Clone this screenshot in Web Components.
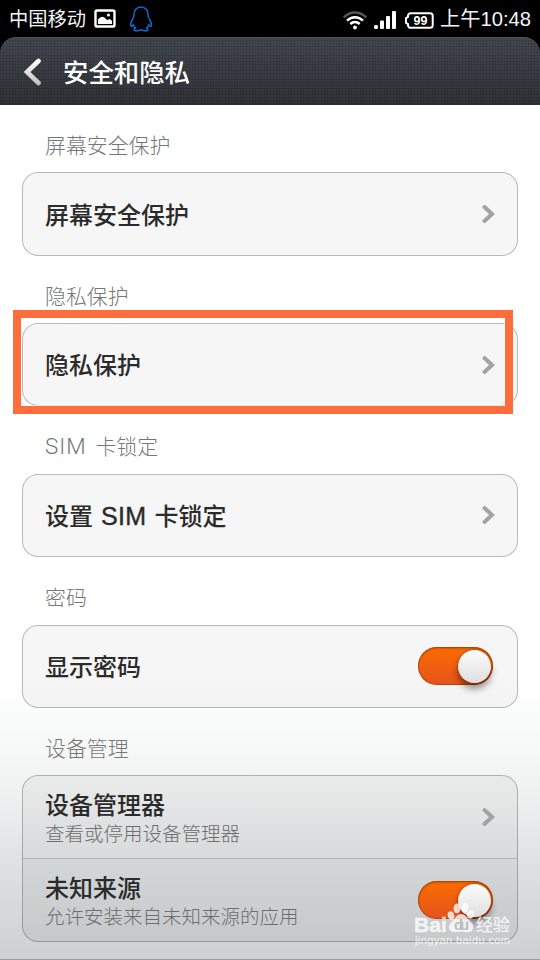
<!DOCTYPE html>
<html lang="zh-CN">
<head>
<meta charset="utf-8">
<title>安全和隐私</title>
<style>
  html,body{ margin:0; height:100%; background:#000; }
  body{ overflow:hidden; font-family:Roboto,"Noto Sans CJK SC",sans-serif; }
</style>
</head>
<body>
<settings-screen>
  <status-bar slot="top" carrier="中国移动" time="上午10:48" battery="99"></status-bar>
  <title-bar slot="top">安全和隐私</title-bar>

  <setting-group label="屏幕安全保护">
    <setting-row>屏幕安全保护</setting-row>
  </setting-group>
  <setting-group label="隐私保护" marked>
    <setting-row>隐私保护</setting-row>
  </setting-group>
  <setting-group label="SIM 卡锁定">
    <setting-row>设置 SIM 卡锁定</setting-row>
  </setting-group>
  <setting-group label="密码">
    <setting-row type="switch">显示密码</setting-row>
  </setting-group>
  <setting-group label="设备管理">
    <setting-row note="查看或停用设备管理器">设备管理器</setting-row>
    <setting-row type="switch" note="允许安装来自未知来源的应用">未知来源</setting-row>
  </setting-group>

  <water-mark slot="over"></water-mark>
</settings-screen>

<script>
(function(){
  // 基类：把 html() 的内容放进 shadow root
  class Base extends HTMLElement {
    constructor(){
      super();
      this.attachShadow({mode:'open'});
    }
    connectedCallback(){
      this.shadowRoot.innerHTML = this.html();
    }
    attr(name){ return this.getAttribute(name) || ''; }
  }

  // ───────────── settings-screen ─────────────
  class SettingsScreen extends Base {
    html(){ return `
      <style>
        :host{ display:flex; flex-direction:column; position:relative; width:540px; height:960px; overflow:hidden; background:#000; }
        main{
          flex:1; box-sizing:border-box; padding:0 22px; border-bottom:1px solid #9b9e9f;
          background:linear-gradient(#fff 0,#fff 570px,#f9fafa 625px,#eff1f1 690px,#dee1e2 760px,#cdd1d3 854px);
        }
      </style>
      <slot name="top"></slot>
      <main><slot></slot></main>
      <slot name="over"></slot>`;
    }
  }

  // ───────────── status-bar ─────────────
  class StatusBar extends Base {
    html(){ return `
      <style>
        :host{ display:flex; align-items:center; height:37px; box-sizing:border-box; padding:0 9px 0 9px; color:#f4f4f4; font-size:19.3px; line-height:37px; }
        span{ padding-top:2px; }
        svg{ display:block; flex:none; }
        .pic{ margin-left:8px; }
        .qq{ margin-left:13px; }
        .wifi{ margin-left:auto; margin-top:3px; }
        .sig{ margin-left:7px; margin-top:3px; }
        .bat{ margin-left:9px; margin-top:3px; }
        .time{ margin-left:6px; padding-top:2px; font-size:20.2px; font-weight:400; white-space:nowrap; font-family:"Liberation Sans","Noto Sans CJK SC",sans-serif; }
      </style>
      <span>${this.attr('carrier')}</span>
      <svg class="pic" width="22" height="19" viewBox="0 0 22 19">
        <rect x="1.5" y="1.5" width="19" height="16" rx="1.6" fill="none" stroke="#fff" stroke-width="2.400"/>
        <path d="M4 15v-4.500q4-5 8-.5l1.500 1L16 10l2 2v3z" fill="#fff"/><circle cx="14.500" cy="6" r="1.500" fill="#fff"/>
      </svg>
      <svg class="qq" width="24" height="26" viewBox="0 0 24 26" fill="none" stroke="#1268cc" stroke-width="1.500" stroke-linejoin="round">
        <path d="M12 1C7.500 1 5 4.500 5 8.500c0 2-.4 3-1.500 5C2 16 1.200 18.500 1.700 20c.4 1 1.500.2 2.500-1.400.5 1.600 1.200 2.700 2.300 3.600-1.600.5-2 1.600-1 2.200 1.600.8 5 .5 6.500-.9 1.500 1.400 4.900 1.700 6.500.9 1-.6.6-1.700-1-2.200 1.100-.9 1.800-2 2.300-3.600 1 1.600 2.100 2.400 2.500 1.400.5-1.500-.3-4-1.800-6.500-1.100-2-1.500-3-1.500-5C19 4.500 16.500 1 12 1z"/>
      </svg>
      <svg class="wifi" width="24" height="19" viewBox="0 0 24 19" fill="none" stroke="#fff" stroke-width="2.500">
        <path d="M.8 6.400C7-.2 17-.2 23.200 6.400" stroke="#555"/>
        <path d="M4 9.700c4.600-4.600 11.400-4.600 16 0"/><path d="M7.300 13c2.800-2.600 6.600-2.600 9.400 0"/>
        <circle cx="12" cy="16.500" r="1.900" fill="#fff" stroke="none"/>
      </svg>
      <svg class="sig" width="22" height="18" viewBox="0 0 22 18" fill="#fff">
        <rect y="14" width="4" height="4" rx="1.500"/><rect x="6" y="9.500" width="4" height="8.500" rx="1"/>
        <rect x="12" y="5" width="4" height="13" rx="1"/><rect x="18" y="0" width="4" height="18" rx="1"/>
      </svg>
      <svg class="bat" width="29" height="17" viewBox="0 0 29 17">
        <path d="M5.500 1.200h19.700q2.500 0 2.500 2.500v9.600q0 2.500-2.500 2.500H5.500Q3.500 15.800 3 13.500V12L1 11V6l2-1V3.500Q3.500 1.200 5.500 1.200z" fill="none" stroke="#fff" stroke-width="2"/>
        <text x="15.500" y="12.800" text-anchor="middle" font-family="Liberation Sans,sans-serif" font-weight="700" font-size="12.500" fill="#fff">${this.attr('battery')}</text>
      </svg>
      <span class="time">${this.attr('time')}</span>`;
    }
  }

  // ───────────── title-bar ─────────────
  class TitleBar extends Base {
    html(){ return `
      <style>
        :host{
          display:flex; align-items:center; height:68px; box-sizing:border-box; padding:1px 23px 0;
          border-radius:16px 16px 0 0; box-shadow:inset 0 1px 0 #50545a;
          color:#fff; font-size:25.4px; font-weight:500; line-height:68px;
          background:
            repeating-linear-gradient(90deg,rgba(0,0,0,.1) 0 1px,transparent 1px 3px),
            repeating-linear-gradient(rgba(0,0,0,.1) 0 1px,transparent 1px 3px),
            linear-gradient(#434850,#303236);
        }
        svg{ margin-right:21px; }
        span{ padding-top:2px; }
      </style>
      <svg width="19" height="28" viewBox="0 0 19 28" fill="none" stroke-width="4.600" stroke-linecap="round">
        <defs><linearGradient id="g" x1="0" y1="0" x2="0" y2="1"><stop stop-color="#fff"/><stop offset="1" stop-color="#c4c4c4"/></linearGradient></defs>
        <path d="M15.500 3 4 14l11.500 11" stroke="url(#g)"/>
      </svg>
      <span><slot></slot></span>`;
    }
  }

  // ───────────── setting-group ─────────────
  class SettingGroup extends Base {
    html(){
      // 西文词单独包一层，字体与间距和中文不同
      const label = this.attr('label').replace(/ ?[A-Z]+ ?/g, s => `<b>${s}</b>`);
      return `
      <style>
        :host{ display:block; position:relative; }
        h2{ margin:0; height:67.3px; padding:13px 23px 0; box-sizing:border-box; font-size:20.9px; line-height:57px; font-weight:300; color:#767777; }
        b{ font:300 22.4px/1 Roboto,sans-serif; letter-spacing:1px; word-spacing:2.5px; }
        .card{ box-sizing:border-box; border:1px solid rgba(0,0,0,.25); border-radius:16px; background:rgba(0,0,0,.034); overflow:hidden; }
        .mark{ position:absolute; left:-9.5px; top:54px; width:500px; height:104px; box-sizing:border-box; border:8px solid #ff6d3d; box-shadow:inset 0 0 0 1px rgba(255,255,255,.6); z-index:1; }
      </style>
      <h2>${label}</h2>
      <div class="card"><slot></slot></div>
      ${this.hasAttribute('marked') ? '<div class="mark"></div>' : ''}`;
    }
  }

  // ───────────── setting-row ─────────────
  class SettingRow extends Base {
    html(){
      const note = this.attr('note');
      const name = this.textContent.replace(/ ?[A-Z]+ ?/g, s => `<b>${s}</b>`);
      const end = this.attr('type') === 'switch'
        ? '<toggle-switch></toggle-switch>'
        : `<svg width="13" height="20" viewBox="0 0 13 20" fill="none" stroke="#a2a3a3" stroke-width="4" stroke-linecap="round"><path d="M2.500 3 10 10l-7.500 7"/></svg>`;
      return `
      <style>
        :host{ display:flex; align-items:center; justify-content:space-between; height:81.45px; padding:0 22px; }
        :host([note]){ height:82px; }
        :host(:not(:first-of-type)){ border-top:1px solid rgba(0,0,0,.16); background:rgba(0,0,0,.01); }
        .name{ padding-top:3px; font-size:24px; line-height:32px; font-weight:500; color:#2b2b2b; white-space:pre; }
        .name.two{ padding-top:4px; }
        b{ font:400 25px/1 "Liberation Sans",sans-serif; letter-spacing:.4px; word-spacing:.6px; -webkit-text-stroke:.4px #2b2b2b; }
        .note{ font-size:19.5px; line-height:26px; font-weight:300; color:#6c6e6e; }
        svg{ margin-right:0; }
        toggle-switch{ margin-right:2px; }
      </style>
      <div>
        <div class="name${note ? ' two' : ''}">${name}</div>
        ${note ? `<div class="note">${note}</div>` : ''}
      </div>
      ${end}`;
    }
  }

  // ───────────── toggle-switch ─────────────
  class ToggleSwitch extends Base {
    html(){ return `
      <style>
        :host{
          display:flex; justify-content:flex-end; align-items:center; flex:none; box-sizing:border-box;
          width:75px; height:38px; padding:0 2px; border-radius:19px;
          background:linear-gradient(#fb6c00,#e5531d);
          box-shadow:inset 0 0 0 1px rgba(150,60,0,.6),inset 0 2px 2px rgba(150,60,0,.4);
        }
        i{ width:33px; height:33px; border-radius:50%; background:linear-gradient(#fdfdfd,#dedede); box-shadow:0 0 2px rgba(90,20,0,.8),0 6px 7px rgba(0,0,0,.4); }
      </style>
      <i></i>`;
    }
  }

  // ───────────── water-mark ─────────────
  class WaterMark extends Base {
    html(){ return `
      <style>
        :host{ position:absolute; left:414px; top:901px; width:100px; color:#fff; opacity:.78; font-family:"Liberation Sans","Noto Sans CJK SC",sans-serif; }
        svg{ display:block; overflow:visible; }
      </style>
      <svg width="100" height="48" viewBox="0 0 100 48" fill="#fff">
        <text x="0" y="31" font-size="21" font-weight="700" textLength="33" lengthAdjust="spacingAndGlyphs" stroke="#fff" stroke-width=".5">Bai</text>
        <ellipse cx="37" cy="14.500" rx="3.300" ry="4.300" transform="rotate(-15 37 14.500)"/>
        <ellipse cx="43" cy="7.500" rx="3.500" ry="5"/>
        <ellipse cx="51" cy="6.800" rx="3.500" ry="5" transform="rotate(12 51 6.800)"/>
        <ellipse cx="56.500" cy="13.500" rx="3.300" ry="4.300" transform="rotate(20 56.500 13.500)"/>
        <path d="M47 13c4 0 6 3.500 8 6 3 3 5 5 4 8.500-1 4-5 4-7.500 3.500-3-.5-5-.5-8 0-3.500.5-8 0-8.500-4-.4-3.500 2-5.500 4.500-8 2.200-2.400 4-6 7.500-6z"/>
        <text x="40" y="28.500" font-size="14.500" font-weight="700" fill="#b9bbbc" textLength="15">du</text>
        <text x="62" y="30" font-size="17" font-weight="500" textLength="34">经验</text>
        <text x="1" y="43" font-size="11" textLength="95">jingyan.baidu.com</text>
      </svg>`;
    }
  }

  customElements.define('toggle-switch', ToggleSwitch);
  customElements.define('setting-row', SettingRow);
  customElements.define('setting-group', SettingGroup);
  customElements.define('title-bar', TitleBar);
  customElements.define('status-bar', StatusBar);
  customElements.define('water-mark', WaterMark);
  customElements.define('settings-screen', SettingsScreen);
})();
</script>
</body>
</html>
